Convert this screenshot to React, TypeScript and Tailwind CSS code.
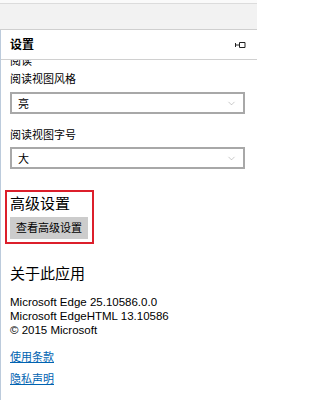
import { ChevronDown } from "lucide-react";

const cjk = "font-['Segoe_UI','Noto_Sans','Noto_Sans_CJK_SC',sans-serif]";

const Select = ({ value }: { value: string }) => (
  <div className="flex h-[22px] w-[235px] items-center justify-between border-2 border-[#a8a8a8] bg-white pl-[6px] pr-[6px]">
    <span className="text-[11px] leading-none text-black">{value}</span>
    <ChevronDown size={11} strokeWidth={1} className="text-[#8a8a8a]" />
  </div>
);

// pin glyph in the pane header
const PinIcon = () => (
  <svg width="11" height="8" viewBox="0 0 11 8" fill="none" stroke="#222" strokeWidth="1">
    <path d="M0.5 2v4M0.5 4h3.5M4.5 1.5h5.5v5H4.5z" />
  </svg>
);

export default function App() {
  return (
    <div className={`flex h-[400px] w-[257px] flex-col overflow-hidden bg-white ${cjk}`}>
      <div className="h-[3px] bg-[#fafafa]" />
      <div className="h-[27px] border-y border-t-[#dcdcdc] border-b-[#cfcfcf] bg-[#f2f2f2]" />
      <div className="flex flex-1 flex-col overflow-hidden border-l border-[#bccbdc]">
        <div className="flex h-[30px] items-center justify-between border-b border-[#d0d0d0] pl-[9px] pr-[11px]">
          <span className="text-[12px] font-bold text-black">设置</span>
          <PinIcon />
        </div>
        <div className="flex flex-1 flex-col overflow-hidden pl-[9px]">
          {/* section heading scrolled mostly out of view */}
          <div className="-mt-[5px] text-[11px] leading-[11px] text-black">阅读</div>
          <div className="mt-[5px] text-[11px] leading-[16px] text-black">阅读视图风格</div>
          <div className="mt-[5px]">
            <Select value="亮" />
          </div>
          <div className="mt-[13px] text-[11px] leading-[16px] text-black">阅读视图字号</div>
          <div className="mt-[4px]">
            <Select value="大" />
          </div>
          <div className="-ml-[5px] mt-[21px] flex w-[89px] flex-col border-2 border-[#dc1f2b] pb-[3px] pl-[3px] pt-[1px]">
            <div className="text-[15px] leading-[20px] text-black">高级设置</div>
            <button className="mt-[4px] flex h-[22px] w-[78px] items-center justify-center bg-[#cccccc] text-[11px] text-black">
              查看高级设置
            </button>
          </div>
          <div className="mt-[19px] text-[15px] leading-[20px] text-black">关于此应用</div>
          <div className="mt-[12px] flex flex-col font-['Liberation_Sans',sans-serif] text-[11.5px] leading-[14px] text-black">
            <span>Microsoft Edge 25.10586.0.0</span>
            <span>Microsoft EdgeHTML 13.10586</span>
            <span>© 2015 Microsoft</span>
          </div>
          <a className="mt-[12px] w-fit text-[11px] leading-[16px] text-[#0063b1] underline">使用条款</a>
          <a className="mt-[6px] w-fit text-[11px] leading-[16px] text-[#0063b1] underline">隐私声明</a>
        </div>
      </div>
    </div>
  );
}
